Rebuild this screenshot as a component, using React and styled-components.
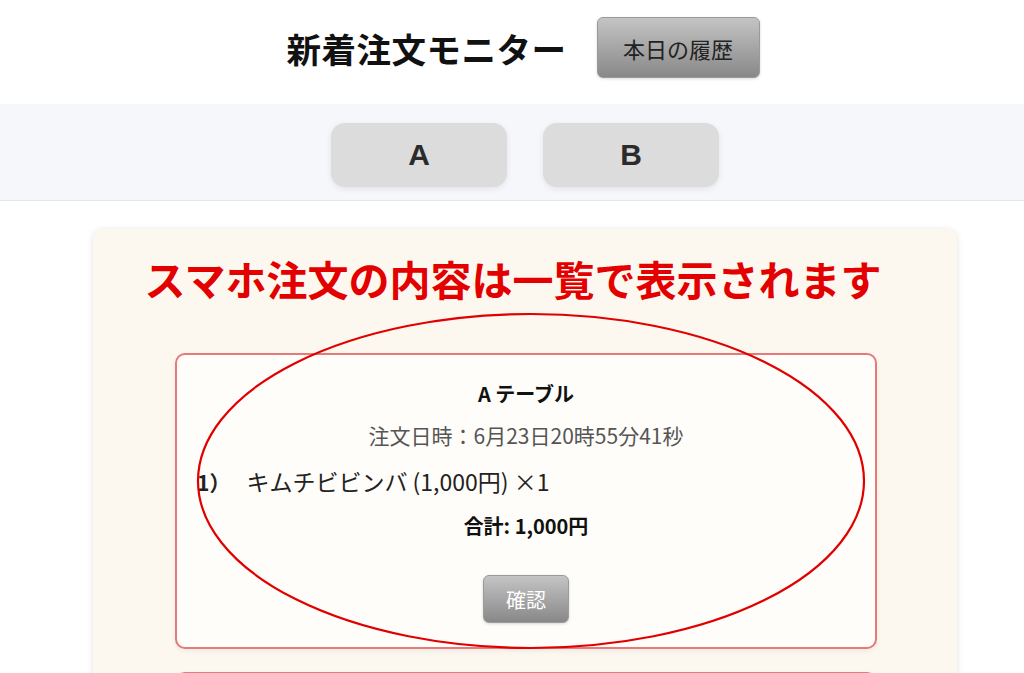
import React from "react";
import styled, { createGlobalStyle } from "styled-components";

const Global = createGlobalStyle`
  html, body { margin: 0; padding: 0; background: #ffffff; }
  body { font-family: "Noto Sans CJK JP", "Noto Sans", sans-serif; color: #111; overflow: hidden; }
  * { box-sizing: border-box; }
`;

const Header = styled.header`
  height: 104px;
  display: flex;
  align-items: center;
  justify-content: center;
  gap: 30px;
  padding-left: 22px;
  padding-bottom: 9px;
`;

const Title = styled.h1`
  margin: 0;
  font-size: 34.5px;
  font-weight: 700;
  color: #111;
  letter-spacing: 0.5px;
`;

const GrayButton = styled.button`
  border: 1px solid #9a9a9a;
  border-radius: 6px;
  background: linear-gradient(#c4c4c4, #888888);
  font-family: "Noto Sans CJK JP", sans-serif;
  color: ${(p) => (p.$light ? "#ffffff" : "#222")};
  font-size: ${(p) => p.$size || 20}px;
  width: ${(p) => p.$w}px;
  height: ${(p) => p.$h}px;
  padding: 0;
  display: flex;
  align-items: center;
  justify-content: center;
  box-shadow: 0 1px 3px rgba(0, 0, 0, 0.15);
`;

const TableNav = styled.nav`
  height: 97px;
  background: #f6f7fb;
  border-bottom: 1px solid #e6e6ea;
  display: flex;
  align-items: center;
  justify-content: center;
  gap: 36px;
  padding-left: 26px;
  padding-top: 6px;
`;

const TableButton = styled.button`
  width: 176px;
  height: 64px;
  border: none;
  border-radius: 14px;
  background: #dcdcdc;
  color: #2b2b2b;
  font-family: "Liberation Sans", Arial, sans-serif;
  font-weight: 700;
  font-size: 30px;
  box-shadow: 0 2px 6px rgba(0, 0, 0, 0.08);
`;

const Main = styled.main`
  padding: 28px 67px 0 93px;
`;

const Panel = styled.section`
  position: relative;
  background: #fcf8ef;
  border-radius: 10px;
  box-shadow: 0 1px 6px rgba(0, 0, 0, 0.12);
  padding: 20px 80px 20px 82px;
  display: flex;
  flex-direction: column;
  align-items: center;
  gap: 23px;
  min-height: 600px;
`;

const Notice = styled.h2`
  margin: 0 0 23px 0;
  transform: translateX(-13px);
  font-size: 41px;
  font-weight: 700;
  color: #e30000;
  white-space: nowrap;
  line-height: 58px;
`;

const OrderCard = styled.article`
  width: 100%;
  background: #fffdf9;
  border: 2px solid #e47a7a;
  border-radius: 10px;
  padding: 24px 20px 24px;
  display: flex;
  flex-direction: column;
  align-items: center;
  box-shadow: 0 2px 5px rgba(0, 0, 0, 0.06);
  min-height: ${(p) => p.$minH || 0}px;
`;

const TableName = styled.div`
  font-size: 20px;
  font-weight: 700;
  line-height: 30px;
`;

const OrderTime = styled.div`
  margin-top: 11px;
  font-size: 21px;
  color: #555;
  line-height: 30px;
`;

const Item = styled.div`
  align-self: stretch;
  margin-top: 16px;
  display: flex;
  align-items: baseline;
  gap: 16px;
  font-size: 23px;
  line-height: 30px;
  color: #222;
`;

const ItemNo = styled.span`
  font-weight: 700;
  font-size: 21px;
`;

const Total = styled.div`
  margin-top: 15px;
  font-size: 20px;
  font-weight: 700;
  line-height: 28px;
`;

const ConfirmRow = styled.div`
  margin-top: 35px;
`;

const Annotation = styled.svg`
  position: absolute;
  left: 0;
  top: 0;
  pointer-events: none;
  overflow: visible;
`;

export default function App() {
  return (
    <>
      <Global />
      <Header>
        <Title>新着注文モニター</Title>
        <GrayButton $w={163} $h={61} $size={22}>本日の履歴</GrayButton>
      </Header>
      <TableNav>
        <TableButton>A</TableButton>
        <TableButton>B</TableButton>
      </TableNav>
      <Main>
        <Panel>
          <Notice>スマホ注文の内容は一覧で表示されます</Notice>
          <OrderCard>
            <TableName>A テーブル</TableName>
            <OrderTime>注文日時：6月23日20時55分41秒</OrderTime>
            <Item>
              <ItemNo>1）</ItemNo>
              <span>キムチビビンバ (1,000円) ×1</span>
            </Item>
            <Total>合計: 1,000円</Total>
            <ConfirmRow>
              <GrayButton $w={86} $h={48} $size={20} $light>確認</GrayButton>
            </ConfirmRow>
          </OrderCard>
          <OrderCard $minH={200} />
          <Annotation width="864" height="600">
            <ellipse cx="438" cy="252" rx="333" ry="167" fill="none" stroke="#e00000" strokeWidth="2.2" />
          </Annotation>
        </Panel>
      </Main>
    </>
  );
}
